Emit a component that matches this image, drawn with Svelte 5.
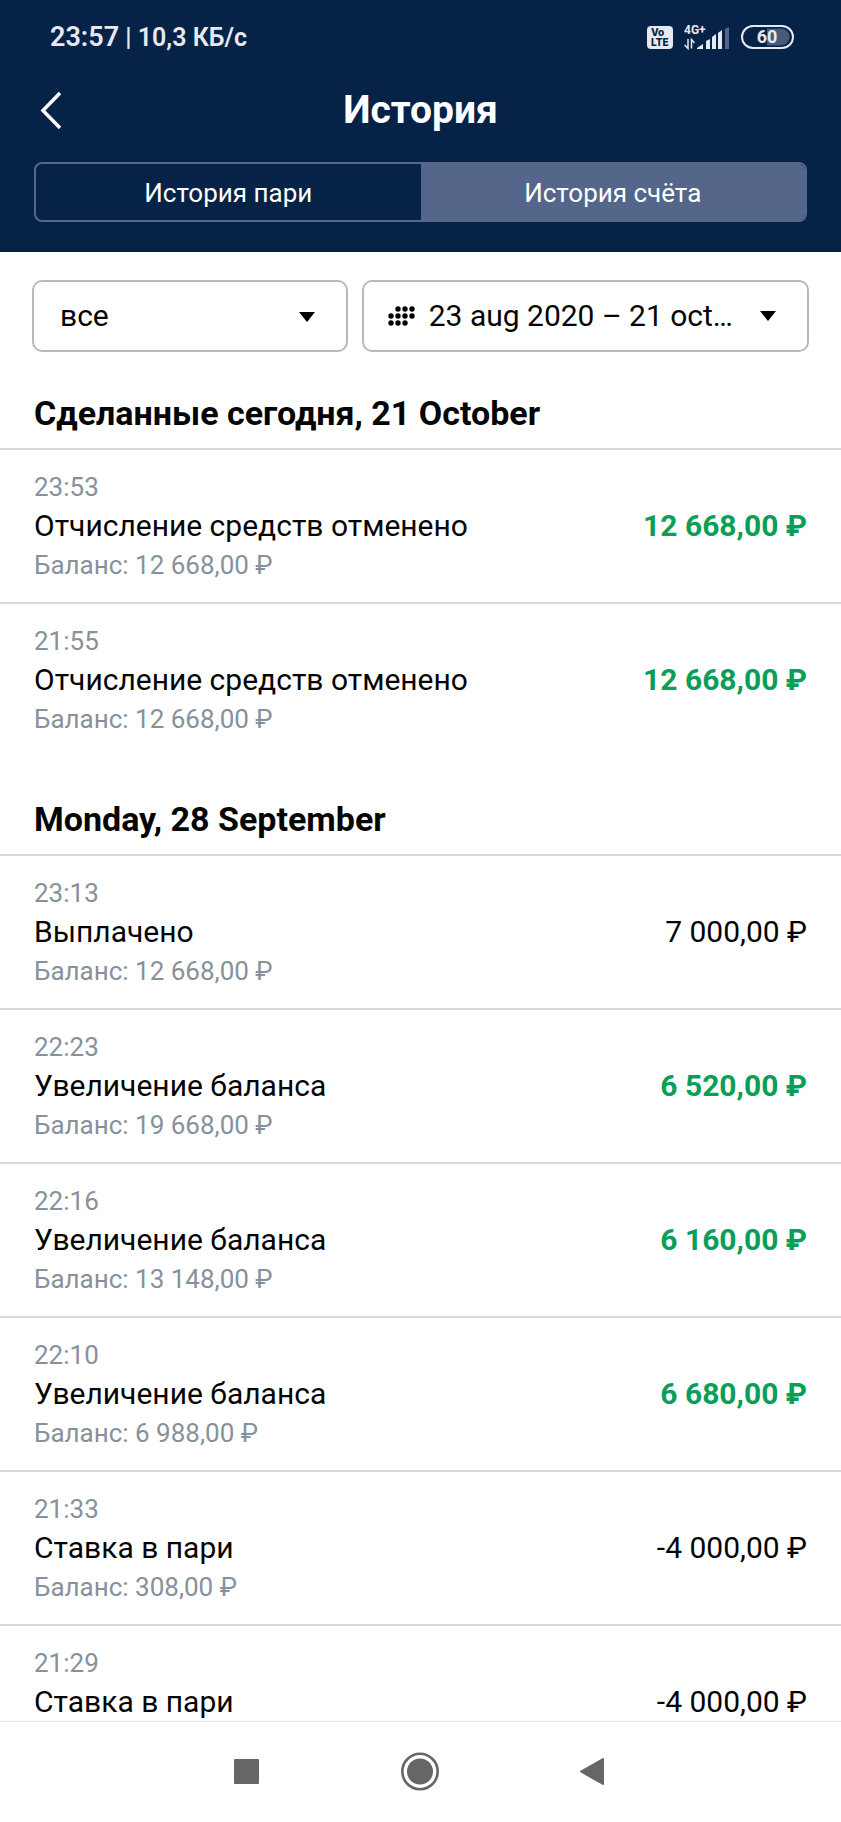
<script>
  const groups = [
    {
      title: 'Сделанные сегодня, 21 October',
      items: [
        { time: '23:53', name: 'Отчисление средств отменено', balance: '12 668,00 ₽', amount: '12 668,00 ₽', income: true },
        { time: '21:55', name: 'Отчисление средств отменено', balance: '12 668,00 ₽', amount: '12 668,00 ₽', income: true }
      ]
    },
    {
      title: 'Monday, 28 September',
      items: [
        { time: '23:13', name: 'Выплачено', balance: '12 668,00 ₽', amount: '7 000,00 ₽' },
        { time: '22:23', name: 'Увеличение баланса', balance: '19 668,00 ₽', amount: '6 520,00 ₽', income: true },
        { time: '22:16', name: 'Увеличение баланса', balance: '13 148,00 ₽', amount: '6 160,00 ₽', income: true },
        { time: '22:10', name: 'Увеличение баланса', balance: '6 988,00 ₽', amount: '6 680,00 ₽', income: true },
        { time: '21:33', name: 'Ставка в пари', balance: '308,00 ₽', amount: '-4 000,00 ₽' },
        { time: '21:29', name: 'Ставка в пари', amount: '-4 000,00 ₽' }
      ]
    }
  ];

  const tabs = ['История пари', 'История счёта'];
  let active = $state(1);

  // Centres of the calendar dots, row by row
  const dots = [
    [10, 3], [17, 3], [24, 3],
    [3, 10], [10, 10], [17, 10], [24, 10],
    [3, 17], [10, 17], [17, 17]
  ];
</script>

<div class="app">
  <header>
    <div class="status">
      <div class="clock"><span class="time">23:57</span> | 10,3 КБ/с</div>
      <div class="indicators">
        <svg width="26" height="24" viewBox="0 0 26 24" aria-hidden="true">
          <rect width="26" height="23" y="1" rx="4" fill="#e6e9ef" />
          <text x="4" y="11" class="volte">Vo</text>
          <text x="4" y="21" class="volte">LTE</text>
        </svg>
        <svg width="46" height="26" viewBox="0 0 46 26" aria-hidden="true">
          <text x="0" y="10" class="net">4G+</text>
          <path d="M4 15v9.500l-3.500-3.500M7.500 24.500v-9l3 3.500" fill="none" stroke="#e6e9ef" stroke-width="1.500" />
          <path d="M13 25v-1l6-4v5zM22 25v-8l4-2v10zM28 25v-12l4-3v15zM34 25v-16l4-3v19z" fill="#e6e9ef" />
          <path d="M41 25v-20l4-2v22z" fill="#54678a" />
        </svg>
        <svg width="53" height="26" viewBox="0 0 53 26" aria-hidden="true">
          <rect x="1" y="2" width="51" height="22" rx="11" fill="none" stroke="#e6e9ef" stroke-width="2" />
          <path d="M26 4.500h14a8.500 8.500 0 0 1 0 17h-14z" fill="#465b7b" />
          <text x="26" y="19" text-anchor="middle" class="charge">60</text>
        </svg>
      </div>
    </div>

    <div class="bar">
      <button class="back" aria-label="Назад">
        <svg width="22" height="38" viewBox="0 0 22 38" aria-hidden="true">
          <path d="M20 2 3 19.500 20 37" fill="none" stroke="#fff" stroke-width="3.500" />
        </svg>
      </button>
      <h1>История</h1>
    </div>

    <div class="tabs">
      {#each tabs as tab, i}
        <button class:active={active === i} aria-pressed={active === i} onclick={() => (active = i)}>{tab}</button>
      {/each}
    </div>
  </header>

  <main>
    <div class="filters">
      <div class="field">
        <select aria-label="Тип операции">
          <option>все</option>
        </select>
        <svg class="caret" width="16" height="10" viewBox="0 0 16 10" aria-hidden="true"><path d="M0 0h16l-8 10z" /></svg>
      </div>
      <button class="period">
        <svg width="27" height="20" viewBox="0 0 27 20" aria-hidden="true">
          {#each dots as [x, y]}
            <circle cx={x} cy={y} r="2.700" />
          {/each}
        </svg>
        <span>23 aug 2020 – 21 oct…</span>
        <svg width="16" height="10" viewBox="0 0 16 10" aria-hidden="true"><path d="M0 0h16l-8 10z" /></svg>
      </button>
    </div>

    {#each groups as group}
      <section>
        <h2>{group.title}</h2>
        <ul>
          {#each group.items as item}
            <li>
              <div class="info">
                <span class="muted">{item.time}</span>
                <span class="name">{item.name}</span>
                {#if item.balance}<span class="muted">Баланс: {item.balance}</span>{/if}
              </div>
              <span class="amount" class:income={item.income}>{item.amount}</span>
            </li>
          {/each}
        </ul>
      </section>
    {/each}
  </main>

  <nav>
    <button aria-label="Недавние">
      <svg width="40" height="40" viewBox="0 0 40 40" aria-hidden="true"><rect x="7" y="7" width="25" height="25" rx="1" /></svg>
    </button>
    <button aria-label="Домой">
      <svg width="40" height="40" viewBox="0 0 40 40" aria-hidden="true">
        <circle cx="19" cy="19.500" r="13" />
        <circle cx="19" cy="19.500" r="17.700" fill="none" stroke="#666" stroke-width="2.600" />
      </svg>
    </button>
    <button aria-label="Назад в системе">
      <svg width="40" height="40" viewBox="0 0 40 40" aria-hidden="true">
        <path d="M7 19.500 29 7v25z" stroke="#666" stroke-width="2" stroke-linejoin="round" />
      </svg>
    </button>
  </nav>
</div>

<style>
  :global(body) {
    background: #fff;
    color: #050505;
    font-family: Roboto, 'Liberation Sans', sans-serif;
  }
  .app {
    display: flex;
    flex-direction: column;
    height: 100vh;
  }
  svg {
    flex: none;
    display: block;
  }
  button,
  select {
    font: inherit;
    color: inherit;
    background: none;
    border: 0;
    padding: 0;
    margin: 0;
    cursor: pointer;
  }

  header {
    flex: none;
    background: #062246;
    color: #fff;
    padding: 0 34px 30px;
  }
  .status {
    display: flex;
    justify-content: space-between;
    align-items: center;
    height: 74px;
    padding: 0 13px 0 16px;
  }
  .clock {
    color: #e6e9ef;
    font-size: 25px;
    font-weight: 600;
  }
  .time {
    font-size: 27px;
  }
  .indicators {
    display: flex;
    align-items: center;
    gap: 11px;
  }
  .volte {
    font: 800 10px Inter, sans-serif;
    fill: #062246;
  }
  .net {
    font: 700 12px Roboto, sans-serif;
    fill: #e6e9ef;
  }
  .charge {
    font: 700 18px Roboto, sans-serif;
    fill: #e6e9ef;
  }
  .bar {
    display: grid;
    grid-template-columns: 40px 1fr 40px;
    align-items: center;
    height: 72px;
    margin-bottom: 16px;
  }
  .back {
    padding: 0 0 0 6px;
  }
  h1 {
    margin: 0;
    font-size: 39px;
    font-weight: 700;
    text-align: center;
  }
  .tabs {
    display: grid;
    grid-template-columns: 1fr 1fr;
    border: 2px solid #54678a;
    border-radius: 8px;
    overflow: hidden;
  }
  .tabs button {
    height: 56px;
    padding-top: 2px;
    font-size: 26px;
  }
  .tabs .active {
    background: #54678a;
  }

  main {
    flex: 1;
    min-height: 0;
    overflow-y: auto;
    scrollbar-width: none;
  }
  .filters {
    display: grid;
    grid-template-columns: 12fr 17fr;
    gap: 14px;
    padding: 28px 32px 0;
    font-size: 30px;
  }
  .field {
    position: relative;
    min-width: 0;
  }
  select,
  .period {
    box-sizing: border-box;
    width: 100%;
    height: 72px;
    border: 2px solid #b4bac4;
    border-radius: 10px;
  }
  select {
    appearance: none;
    padding: 0 56px 2px 26px;
  }
  .caret {
    position: absolute;
    right: 33px;
    top: 32px;
    pointer-events: none;
  }
  .period {
    display: flex;
    align-items: center;
    min-width: 0;
    padding: 0 31px 0 24px;
  }
  .period span {
    flex: 1;
    min-width: 0;
    margin: 0 12px 0 14px;
    padding-bottom: 2px;
    white-space: nowrap;
    text-align: left;
  }

  section {
    margin-bottom: 2px;
  }
  h2 {
    margin: 0;
    padding: 40px 34px 14px;
    font-size: 34px;
    line-height: 42px;
    font-weight: 700;
  }
  ul {
    list-style: none;
    margin: 0;
    padding: 0;
  }
  li {
    display: flex;
    justify-content: space-between;
    gap: 24px;
    padding: 18px 34px;
    border-top: 2px solid #d6dadf;
  }
  .info {
    display: flex;
    flex-direction: column;
    min-width: 0;
  }
  .muted {
    color: #87919c;
    font-size: 26px;
    line-height: 38px;
  }
  .name,
  .amount {
    font-size: 30px;
    line-height: 40px;
  }
  .amount {
    flex: none;
    padding-top: 38px;
  }
  .income {
    color: #0a9f58;
    font-weight: 700;
  }

  nav {
    flex: none;
    display: grid;
    grid-template-columns: repeat(3, 1fr);
    height: 100px;
    padding: 0 19%;
    border-top: 1px solid #e4e4e4;
    background: #fff;
  }
  nav button {
    display: flex;
    align-items: center;
    justify-content: center;
  }
  nav svg {
    fill: #666;
  }
</style>
